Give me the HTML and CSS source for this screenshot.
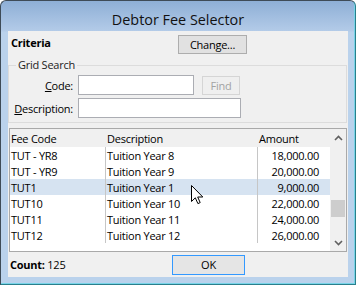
FILE: index.html
```html
<!DOCTYPE html>
<html>
<head>
<meta charset="utf-8">
<link rel="stylesheet" href="styles.css">
</head>
<body>
<div class="window">
  <div class="titlebar">Debtor Fee Selector</div>
  <div class="client">
    <div class="criteria-head">
      <span class="criteria-label">Criteria</span>
      <button class="btn change">Change...</button>
    </div>
    <fieldset class="grid-search">
      <legend>Grid Search</legend>
      <div class="form">
        <label class="lbl"><u>C</u>ode:</label>
        <div class="field-row"><input class="txt code"><button class="btn find" disabled>Find</button></div>
        <label class="lbl"><u>D</u>escription:</label>
        <div class="field-row"><input class="txt desc"></div>
      </div>
    </fieldset>
    <div class="list">
      <div class="list-main">
        <div class="row head">
          <div class="cell c1">Fee Code</div>
          <div class="cell c2">Description</div>
          <div class="cell c3">Amount</div>
        </div>
        <div class="row data">
          <div class="cell c1">TUT - YR8</div>
          <div class="cell c2">Tuition Year 8</div>
          <div class="cell c3">18,000.00</div>
        </div>
        <div class="row data">
          <div class="cell c1">TUT - YR9</div>
          <div class="cell c2">Tuition Year 9</div>
          <div class="cell c3">20,000.00</div>
        </div>
        <div class="row data sel">
          <div class="cell c1">TUT1</div>
          <div class="cell c2">Tuition Year 1</div>
          <div class="cell c3">9,000.00</div>
        </div>
        <div class="row data">
          <div class="cell c1">TUT10</div>
          <div class="cell c2">Tuition Year 10</div>
          <div class="cell c3">22,000.00</div>
        </div>
        <div class="row data">
          <div class="cell c1">TUT11</div>
          <div class="cell c2">Tuition Year 11</div>
          <div class="cell c3">24,000.00</div>
        </div>
        <div class="row data">
          <div class="cell c1">TUT12</div>
          <div class="cell c2">Tuition Year 12</div>
          <div class="cell c3">26,000.00</div>
        </div>
      </div>
      <div class="sb">
        <div class="sb-btn"><svg width="9" height="6" viewBox="0 0 9 6"><path d="M1 5 L4.5 1.5 L8 5" fill="none" stroke="#606060" stroke-width="1.6"/></svg></div>
        <div class="sb-track"><div class="thumb"></div></div>
        <div class="sb-btn"><svg width="9" height="6" viewBox="0 0 9 6"><path d="M1 1 L4.5 4.5 L8 1" fill="none" stroke="#606060" stroke-width="1.6"/></svg></div>
      </div>
    </div>
    <div class="footer">
      <div class="count"><b>Count:</b> 125</div>
      <button class="btn ok">OK</button>
    </div>
  </div>
  <svg class="cursor" width="13" height="20" viewBox="0 0 13 20"><path d="M0.5 0.5 V16.5 L4.3 12.8 L6.9 18.6 L9.2 17.6 L6.7 12 H11.8 Z" fill="#fff" stroke="#000" stroke-width="1" stroke-linejoin="miter"/></svg>
</div>
</body>
</html>
```
FILE: styles.css
```css
* { box-sizing: border-box; }
body {
  margin: 0;
  background: #fff;
  font-family: "Open Sans", "Noto Sans", sans-serif;
  font-size: 11px;
  letter-spacing: -0.25px;
  color: #000;
}
.window {
  position: relative;
  width: 356px;
  height: 285px;
  border: 1px solid #3e4b57;
  border-right-color: #2a7f8c;
  border-bottom-color: #2a7f8c;
  border-radius: 6px 6px 0 0;
  background: linear-gradient(#8eafd6 0, #b3cbe8 30px, #bad2ec 31px, #bad2ec 100%);
  box-shadow: inset -1px -1px 0 #78d4e8;
  display: flex;
  flex-direction: column;
  padding: 0 7px 7px 7px;
}
.titlebar {
  height: 30px;
  flex: none;
  display: flex;
  align-items: center;
  justify-content: center;
  padding-top: 6px;
  font-size: 14.4px;
  letter-spacing: 0;
  color: #111;
}
.client {
  flex: 1;
  background: #f0f0f0;
  display: flex;
  flex-direction: column;
}
.criteria-head {
  height: 27px;
  flex: none;
  display: flex;
  align-items: flex-start;
  padding-top: 4px;
}
.criteria-label {
  width: 170px;
  padding-left: 3px;
  font-weight: bold;
  line-height: 16px;
}
.btn {
  font: inherit;
  letter-spacing: inherit;
  color: #000;
  border: 1px solid #adadad;
  background: #e1e1e1;
  padding: 0;
  margin: 0;
}
.change { width: 69px; height: 19px; }
.grid-search {
  flex: none;
  margin: 0 1px 0 0;
  padding: 3px 0 4px 0;
  border: 1px solid #dcdcdc;
  min-width: 0;
}
.grid-search legend {
  margin-left: 7px;
  padding: 0 2px;
  line-height: 14px;
  color: #222;
}
.form {
  display: grid;
  grid-template-columns: 64px auto;
  column-gap: 5px;
  row-gap: 3px;
  align-items: center;
}
.lbl { text-align: right; }
.field-row { display: flex; align-items: center; gap: 8px; }
.txt {
  height: 20px;
  border: 1px solid #abadb3;
  background: #fff;
  padding: 0;
  margin: 0;
  font: inherit;
}
.code { width: 116px; }
.desc { width: 163px; }
.find {
  width: 38px;
  height: 19px;
  border-color: #d5d5d5;
  background: #efefef;
  color: #a3a3a3;
}
.list {
  flex: none;
  margin: 5px 1px 0 1px;
  height: 124px;
  border: 1px solid #a9a9a9;
  background: #fff;
  display: flex;
}
.list-main {
  width: 320px;
  display: flex;
  flex-direction: column;
}
.row { display: flex; height: 16px; align-items: center; }
.row.head { height: 18px; background: #f0f0f0; }
.cell { white-space: nowrap; height: 100%; display: flex; align-items: center; }
.c1 { width: 96px; padding-left: 1px; }
.c2 { width: 152px; padding-left: 1px; }
.c3 { width: 72px; padding-left: 1px; }
.data .c1, .data .c2 { border-right: 1px solid #c6c6c6; }
.data .c3 { justify-content: flex-end; padding-right: 11px; }
.row.sel { background: #d6e3f1; }
.sb {
  width: 16px;
  background: #f0f0f0;
  display: flex;
  flex-direction: column;
}
.sb-btn {
  height: 17px;
  flex: none;
  display: flex;
  align-items: center;
  justify-content: center;
}
.sb-track { flex: 1; }
.thumb {
  margin: 54px auto 0;
  width: 14px;
  height: 17px;
  background: #cdcdcd;
}
.footer {
  flex: 1;
  display: flex;
  align-items: center;
  padding-left: 2px;
}
.count { width: 162px; }
.ok {
  width: 73px;
  height: 20px;
  border-color: #3399ff;
  background: #e5e5e5;
}
.cursor {
  position: absolute;
  left: 190px;
  top: 184px;
}
```
